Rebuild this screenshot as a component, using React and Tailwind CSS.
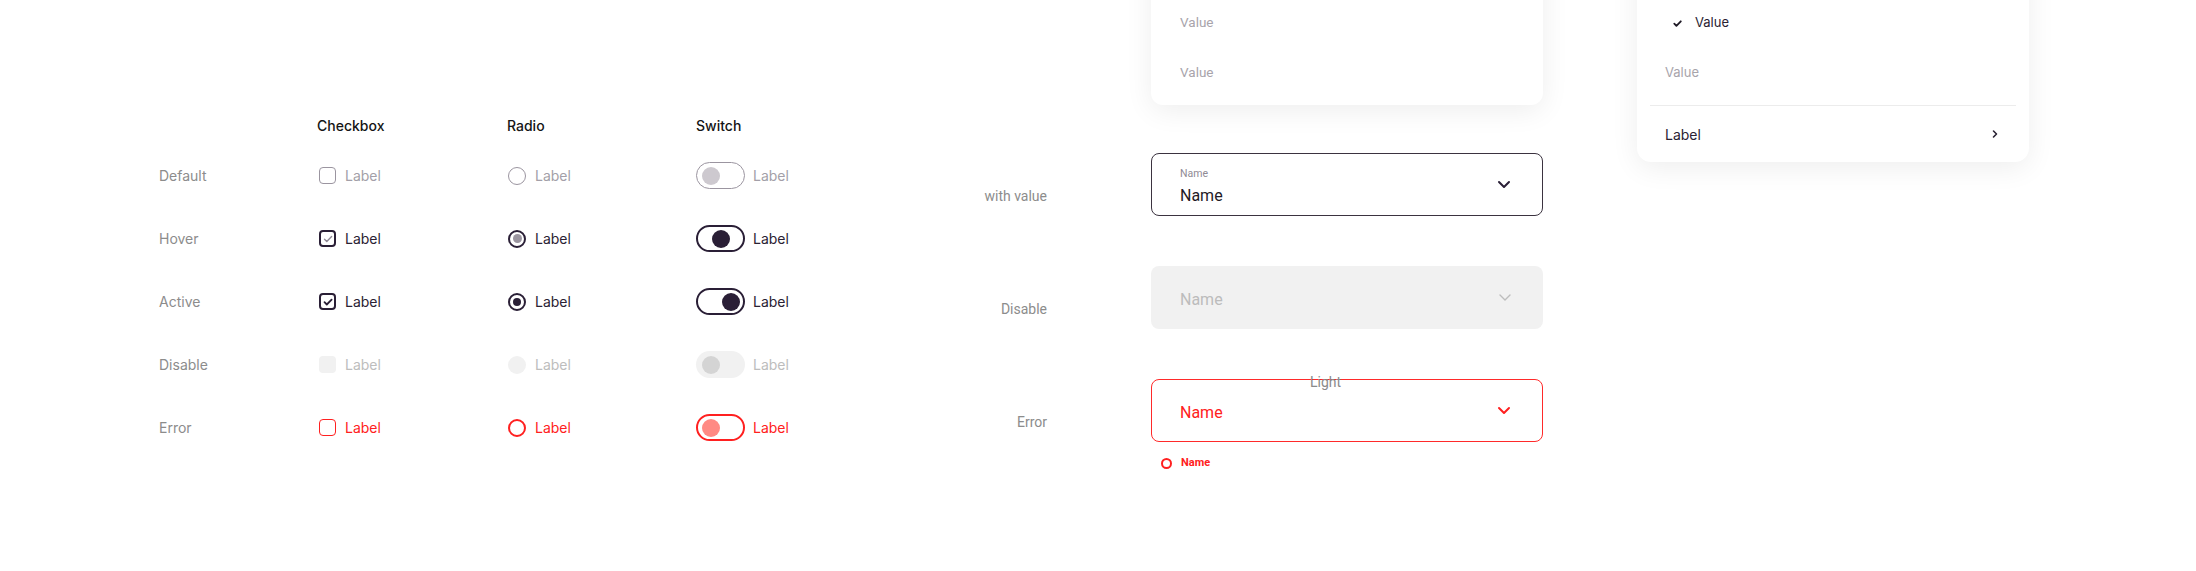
import React from "react";

const DARK = "#2a1f36";

function Check({ color, size = 12, sw = 1.6 }) {
  return (
    <svg width={size} height={size} viewBox="0 0 12 12" fill="none">
      <path d="M2.5 6.2l2.3 2.3L9.6 3.6" stroke={color} strokeWidth={sw} strokeLinecap="round" strokeLinejoin="round" />
    </svg>
  );
}

function Checkbox({ state }) {
  if (state === "default")
    return <div className="w-[17px] h-[17px] rounded-[4px] border-[1.5px] border-[#9b95a0]" />;
  if (state === "hover")
    return (
      <div className="w-[17px] h-[17px] rounded-[4px] border-2 border-[#2a1f36] flex items-center justify-center">
        <Check color="#8f8996" size={12} sw={1.4} />
      </div>
    );
  if (state === "active")
    return (
      <div className="w-[17px] h-[17px] rounded-[4px] border-2 border-[#2a1f36] flex items-center justify-center">
        <Check color="#2a1f36" size={12} sw={1.8} />
      </div>
    );
  if (state === "disable") return <div className="w-[17px] h-[17px] rounded-[4px] bg-[#f1f1f1]" />;
  return <div className="w-[17px] h-[17px] rounded-[4px] border-[1.5px] border-[#ff2020]" />;
}

function Radio({ state }) {
  if (state === "default")
    return <div className="w-[18px] h-[18px] rounded-full border-[1.5px] border-[#9b95a0]" />;
  if (state === "hover")
    return (
      <div className="w-[18px] h-[18px] rounded-full border-2 border-[#2a1f36] flex items-center justify-center">
        <div className="w-[9px] h-[9px] rounded-full bg-[#9b95a0]" />
      </div>
    );
  if (state === "active")
    return (
      <div className="w-[18px] h-[18px] rounded-full border-2 border-[#2a1f36] flex items-center justify-center">
        <div className="w-[8px] h-[8px] rounded-full bg-[#2a1f36]" />
      </div>
    );
  if (state === "disable") return <div className="w-[18px] h-[18px] rounded-full bg-[#f1f1f1]" />;
  return <div className="w-[18px] h-[18px] rounded-full border-2 border-[#ff2020]" />;
}

function Switch({ state }) {
  if (state === "default")
    return (
      <div className="w-[49px] h-[27px] rounded-full border-[1.5px] border-[#9b95a0] flex items-center pl-[4.5px]">
        <div className="w-[18px] h-[18px] rounded-full bg-[#cdc9cf]" />
      </div>
    );
  if (state === "hover")
    return (
      <div className="w-[49px] h-[27px] rounded-full border-2 border-[#2a1f36] flex items-center justify-center">
        <div className="w-[18px] h-[18px] rounded-full bg-[#2a1f36]" />
      </div>
    );
  if (state === "active")
    return (
      <div className="w-[49px] h-[27px] rounded-full border-2 border-[#2a1f36] flex items-center justify-end pr-[3px]">
        <div className="w-[18px] h-[18px] rounded-full bg-[#2a1f36]" />
      </div>
    );
  if (state === "disable")
    return (
      <div className="w-[49px] h-[27px] rounded-full bg-[#f1f1f1] flex items-center pl-[6px]">
        <div className="w-[18px] h-[18px] rounded-full bg-[#d4d4d4]" />
      </div>
    );
  return (
    <div className="w-[49px] h-[27px] rounded-full border-2 border-[#ff2020] flex items-center pl-[4px]">
      <div className="w-[18px] h-[18px] rounded-full bg-[#ff8a84]" />
    </div>
  );
}

const labelColor = {
  default: "text-[#a39fa8]",
  hover: "text-[#2a2233]",
  active: "text-[#2a2233]",
  disable: "text-[#bdbdbd]",
  error: "text-[#ff2020]",
};

const rows = [
  ["Default", "default"],
  ["Hover", "hover"],
  ["Active", "active"],
  ["Disable", "disable"],
  ["Error", "error"],
];

function Item({ children, state, gap = "gap-[9px]" }) {
  return (
    <div className={`flex items-center ${gap}`}>
      {children}
      <span className={`text-[14px] leading-[18px] ${labelColor[state]}`}>Label</span>
    </div>
  );
}

function ChevronDown({ color, sw = 2 }) {
  return (
    <svg width="14" height="9" viewBox="0 0 14 9" fill="none">
      <path d="M2 2l5 5 5-5" stroke={color} strokeWidth={sw} strokeLinecap="round" strokeLinejoin="round" />
    </svg>
  );
}

export default function App() {
  return (
    <div
      className="w-[2196px] h-[571px] overflow-hidden bg-white flex"
      style={{ fontFamily: "Inter, 'Noto Sans', sans-serif" }}
    >
      {/* Left table */}
      <div className="w-[960px] shrink-0 pl-[159px] pt-[107px]">
        <div className="grid grid-cols-[160px_189px_188px_200px]">
          <div className="h-[37px]" />
          <div className="h-[37px] flex items-center -ml-[2px] text-[14px] font-medium text-[#151515]">Checkbox</div>
          <div className="h-[37px] flex items-center -ml-[1px] text-[14px] font-medium text-[#151515]">Radio</div>
          <div className="h-[37px] flex items-center text-[14px] font-medium text-[#151515]">Switch</div>
          {rows.map(([name, st]) => (
            <React.Fragment key={name}>
              <div className="h-[63px] flex items-center text-[14px] text-[#8c8c8c]">{name}</div>
              <div className="h-[63px] flex items-center">
                <Item state={st}>
                  <Checkbox state={st} />
                </Item>
              </div>
              <div className="h-[63px] flex items-center">
                <Item state={st}>
                  <Radio state={st} />
                </Item>
              </div>
              <div className="h-[63px] flex items-center">
                <Item state={st} gap="gap-[8px]">
                  <Switch state={st} />
                </Item>
              </div>
            </React.Fragment>
          ))}
        </div>
      </div>

      {/* Right section */}
      <div className="flex" style={{ fontFamily: "Roboto, 'Noto Sans', sans-serif" }}>
        <div className="w-[583px] shrink-0 flex flex-col">
          {/* dropdown card 1 */}
          <div className="ml-[191px] w-[392px] -mt-[60px] pt-[57px] pb-[8px] bg-white rounded-[12px] shadow-[0_6px_28px_rgba(0,0,0,0.07)] flex flex-col">
            <div className="h-[50px] flex items-center pl-[29px] text-[13.5px] text-[#a8a4ab]">Value</div>
            <div className="h-[50px] flex items-center pl-[29px] text-[13.5px] text-[#a8a4ab]">Value</div>
          </div>

          <div className="mt-[48px] flex flex-col gap-[50px]">
            {/* with value */}
            <div className="flex">
              <div className="w-[87px] pt-[34px] text-right text-[14px] leading-[18px] text-[#8c8c8c]">with value</div>
              <div className="ml-[104px] w-[392px] h-[63px] rounded-[8px] border border-[#3b3340] flex items-center pl-[28px] pr-[31px]">
                <div className="flex-1 flex flex-col pt-[3px]">
                  <span className="text-[10.5px] leading-[12px] text-[#8f8a94]">Name</span>
                  <span className="mt-[6px] text-[16px] leading-[19px] text-[#1f1a26]">Name</span>
                </div>
                <ChevronDown color={DARK} sw={2} />
              </div>
            </div>

            {/* disable */}
            <div className="flex">
              <div className="w-[87px] pt-[34px] text-right text-[14px] leading-[18px] text-[#8c8c8c]">Disable</div>
              <div className="ml-[104px] w-[392px] h-[63px] rounded-[8px] bg-[#f1f1f1] flex items-center pl-[29px] pr-[31px]">
                <span className="flex-1 text-[16px] leading-[19px] text-[#bcbcbc] mt-[3px]">Name</span>
                <ChevronDown color="#bdbdbd" sw={1.4} />
              </div>
            </div>

            {/* error */}
            <div className="flex">
              <div className="w-[87px] pt-[34px] text-right text-[14px] leading-[18px] text-[#8c8c8c]">Error</div>
              <div className="ml-[104px] w-[392px] flex flex-col">
                <div className="relative w-[392px] h-[63px] rounded-[8px] border border-[#ff2a2a] flex items-center pl-[28px] pr-[31px]">
                  <span className="flex-1 text-[16px] leading-[19px] text-[#ff2020] mt-[3px]">Name</span>
                  <ChevronDown color="#ff2020" sw={2} />
                  <span className="absolute left-[158px] top-[-6px] text-[14px] leading-[16px] text-[#8a8a8a] z-10">Light</span>
                </div>
                <div className="mt-[14px] h-[14px] flex items-center gap-[9px] pl-[10px]">
                  <div className="w-[11px] h-[11px] rounded-full border-2 border-[#ff2020]" />
                  <span className="text-[11px] leading-[12px] font-bold text-[#ff2020]">Name</span>
                </div>
              </div>
            </div>
          </div>
        </div>

        {/* dropdown card 2 */}
        <div className="ml-[94px] w-[392px] self-start" style={{ fontFamily: "Inter, 'Noto Sans', sans-serif" }}>
          <div className="-mt-[60px] pt-[58px] bg-white rounded-[14px] shadow-[0_6px_28px_rgba(0,0,0,0.07)] flex flex-col">
            <div className="h-[50px] flex items-center pl-[35px] gap-[12px]">
              <Check color="#1f1a26" size={11} sw={2} />
              <span className="text-[13px] text-[#2a2233]">Value</span>
            </div>
            <div className="h-[50px] flex items-center pl-[28px] text-[13px] text-[#a8a4ab]">Value</div>
            <div className="mt-[7px] mx-[13px] border-t border-[#ececec]" />
            <div className="h-[56px] flex items-center pl-[28px] pr-[30px] justify-between">
              <span className="text-[14px] text-[#2a2233]">Label</span>
              <svg width="8" height="10" viewBox="0 0 8 10" fill="none">
                <path d="M2.5 2l3 3-3 3" stroke="#2a2233" strokeWidth="1.6" strokeLinecap="round" strokeLinejoin="round" />
              </svg>
            </div>
          </div>
        </div>
      </div>
    </div>
  );
}
